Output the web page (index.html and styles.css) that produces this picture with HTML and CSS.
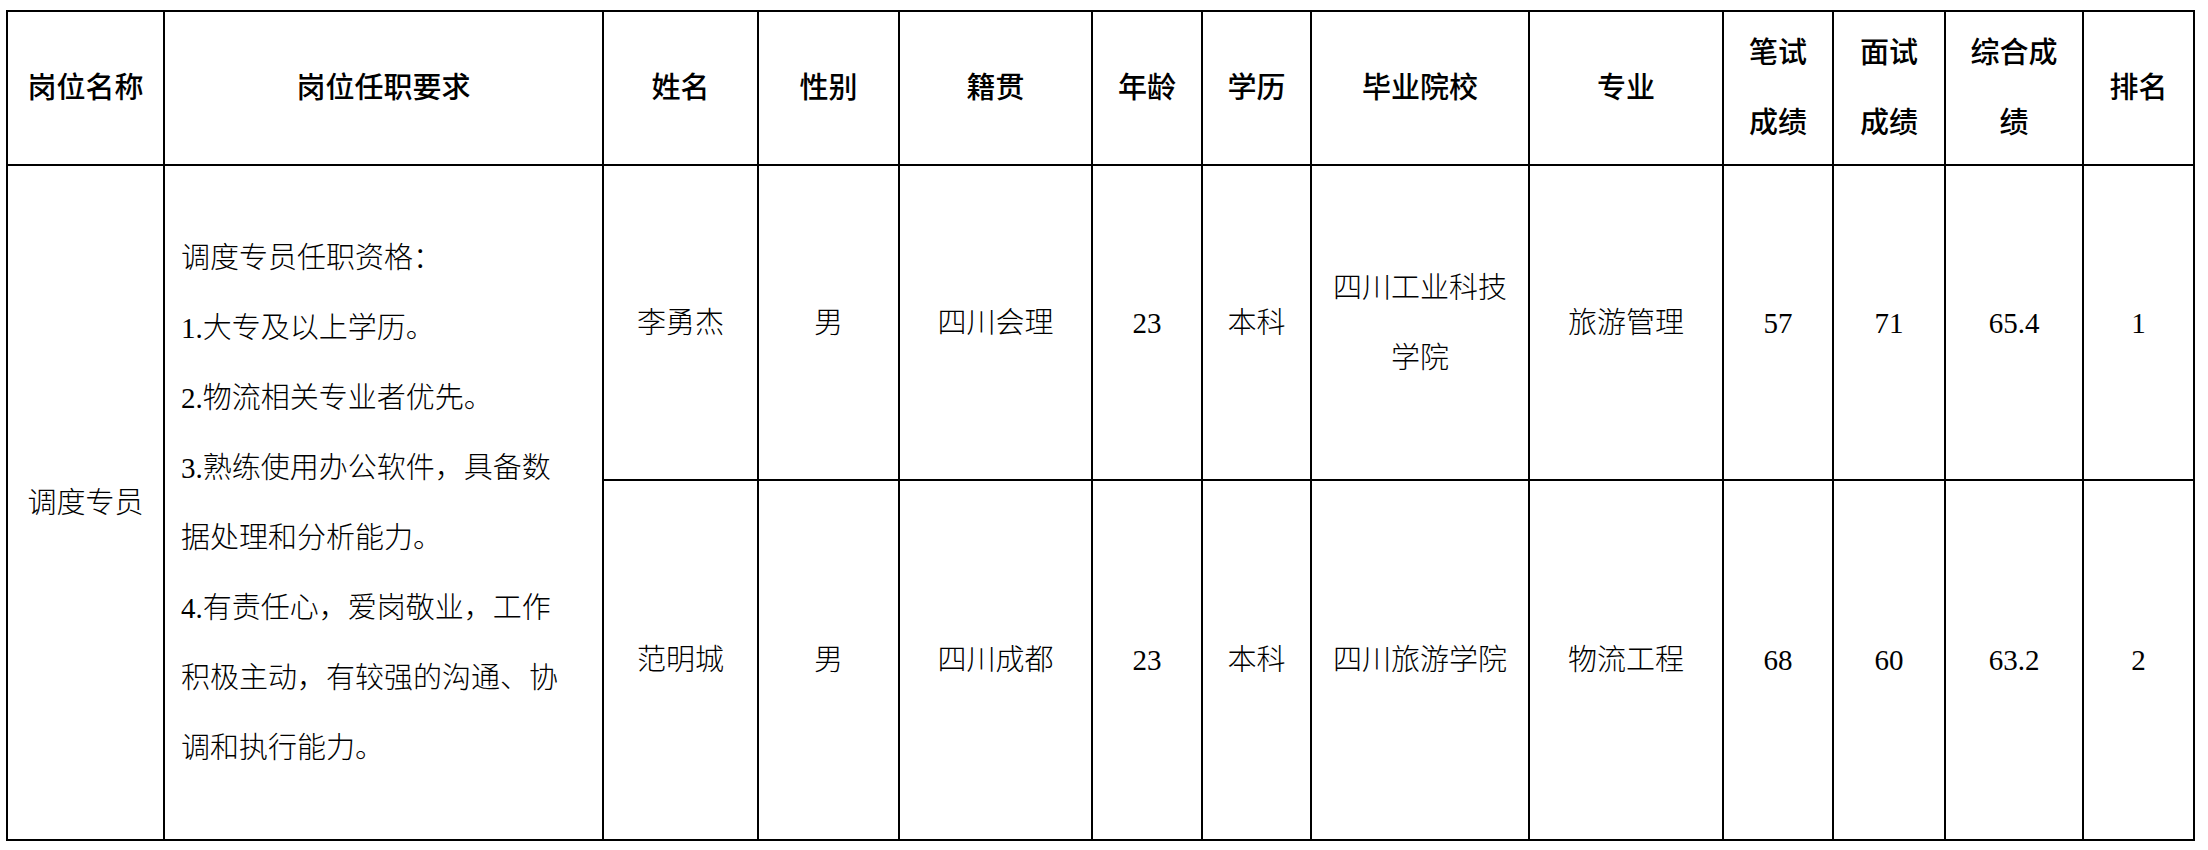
FILE: index.html
```html
<!DOCTYPE html>
<html lang="zh-CN">
<head>
<meta charset="utf-8">
<title>调度专员</title>
<link rel="stylesheet" href="styles.css">
</head>
<body>
<table class="sheet">
  <colgroup>
    <col class="c-post">
    <col class="c-req">
    <col class="c-name">
    <col class="c-sex">
    <col class="c-origin">
    <col class="c-age">
    <col class="c-edu">
    <col class="c-school">
    <col class="c-major">
    <col class="c-written">
    <col class="c-interview">
    <col class="c-total">
    <col class="c-rank">
  </colgroup>
  <thead>
    <tr class="r-head">
      <th>岗位名称</th>
      <th>岗位任职要求</th>
      <th>姓名</th>
      <th>性别</th>
      <th>籍贯</th>
      <th>年龄</th>
      <th>学历</th>
      <th>毕业院校</th>
      <th>专业</th>
      <th class="wrap">笔试成绩</th>
      <th class="wrap">面试成绩</th>
      <th class="wrap">综合成绩</th>
      <th>排名</th>
    </tr>
  </thead>
  <tbody>
    <tr class="r-one">
      <td rowspan="2">调度专员</td>
      <td rowspan="2" class="req">调度专员任职资格：<br>1.大专及以上学历。<br>2.物流相关专业者优先。<br>3.熟练使用办公软件，具备数据处理和分析能力。<br>4.有责任心，爱岗敬业，工作积极主动，有较强的沟通、协调和执行能力。</td>
      <td>李勇杰</td>
      <td>男</td>
      <td>四川会理</td>
      <td>23</td>
      <td>本科</td>
      <td>四川工业科技学院</td>
      <td>旅游管理</td>
      <td>57</td>
      <td>71</td>
      <td>65.4</td>
      <td>1</td>
    </tr>
    <tr class="r-two">
      <td>范明城</td>
      <td>男</td>
      <td>四川成都</td>
      <td>23</td>
      <td>本科</td>
      <td>四川旅游学院</td>
      <td>物流工程</td>
      <td>68</td>
      <td>60</td>
      <td>63.2</td>
      <td>2</td>
    </tr>
  </tbody>
</table>
</body>
</html>
```
FILE: styles.css
```css
html, body {
  margin: 0;
  padding: 0;
  background: #ffffff;
}

body {
  padding: 10px 0 0 6px;
  font-family: "Liberation Serif", "Noto Sans CJK SC", serif;
  color: #000000;
}

.sheet {
  border-collapse: collapse;
  table-layout: fixed;
  width: 2189px;
  font-size: 29px;
  line-height: 70px;
}

.sheet th,
.sheet td {
  border: 2px solid #000000;
  padding: 0 12px;
  text-align: center;
  vertical-align: middle;
  font-weight: 300;
}

.sheet th {
  font-weight: 500;
}

.c-post { width: 157px; }
.c-req { width: 439px; }
.c-name { width: 155px; }
.c-sex { width: 141px; }
.c-origin { width: 193px; }
.c-age { width: 110px; }
.c-edu { width: 109px; }
.c-school { width: 218px; }
.c-major { width: 194px; }
.c-written { width: 110px; }
.c-interview { width: 112px; }
.c-total { width: 138px; }
.c-rank { width: 111px; }

.r-head { height: 154px; }
.r-one { height: 315px; }
.r-two { height: 360px; }

.sheet td.req {
  text-align: left;
  padding: 0 32px 0 16px;
}
```
